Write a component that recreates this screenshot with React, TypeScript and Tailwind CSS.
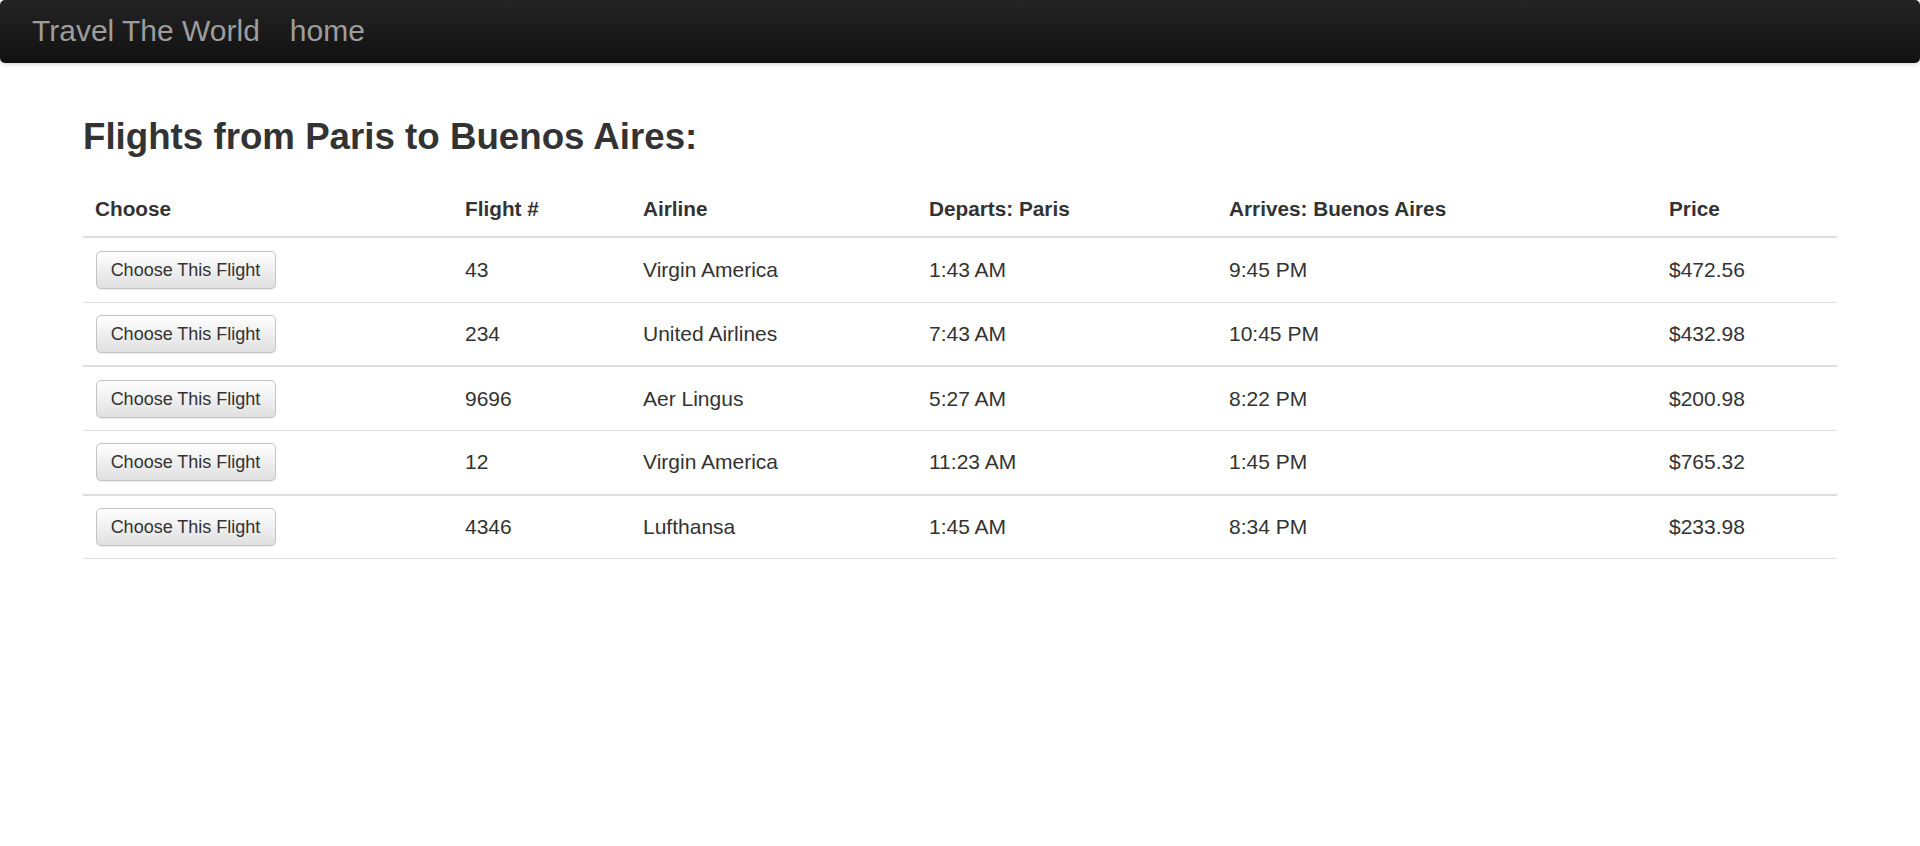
const flights = [
  { num: "43", airline: "Virgin America", departs: "1:43 AM", arrives: "9:45 PM", price: "$472.56" },
  { num: "234", airline: "United Airlines", departs: "7:43 AM", arrives: "10:45 PM", price: "$432.98" },
  { num: "9696", airline: "Aer Lingus", departs: "5:27 AM", arrives: "8:22 PM", price: "$200.98" },
  { num: "12", airline: "Virgin America", departs: "11:23 AM", arrives: "1:45 PM", price: "$765.32" },
  { num: "4346", airline: "Lufthansa", departs: "1:45 AM", arrives: "8:34 PM", price: "$233.98" },
];

export default function App() {
  return (
    <div className="min-h-screen bg-white text-[#333] font-['Liberation_Sans',Arial,sans-serif]">
      {/* Navbar */}
      <nav className="h-[62.5px] flex items-center gap-[30px] px-[32px] rounded-[5px] bg-gradient-to-b from-[#242424] to-[#111111] shadow-[0_1px_4px_rgba(0,0,0,0.2)]">
        <a className="text-[30px] leading-[40px] text-[#9d9d9d]">Travel The World</a>
        <a className="text-[30px] leading-[40px] text-[#9d9d9d]">home</a>
      </nav>

      <div className="px-[83px]">
        <h2 className="mt-[54px] text-[36.7px] leading-[40px] font-bold">Flights from Paris to Buenos Aires:</h2>

        <table className="mt-[29px] w-full table-fixed border-collapse text-[21px] leading-[28px]">
          <colgroup>
            <col className="w-[369.5px]" />
            <col className="w-[178px]" />
            <col className="w-[286px]" />
            <col className="w-[300px]" />
            <col className="w-[440px]" />
            <col />
          </colgroup>
          <thead>
            <tr className="border-b-2 border-[#dddddd] text-left text-[20.75px]">
              <th className="pl-[12px] pt-[9.5px] pb-[12.5px] font-bold">Choose</th>
              <th className="pl-[12.5px] pt-[9.5px] pb-[12.5px] font-bold">Flight #</th>
              <th className="pl-[12.5px] pt-[9.5px] pb-[12.5px] font-bold">Airline</th>
              <th className="pl-[12.5px] pt-[9.5px] pb-[12.5px] font-bold">Departs: Paris</th>
              <th className="pl-[12.5px] pt-[9.5px] pb-[12.5px] font-bold">Arrives: Buenos Aires</th>
              <th className="pl-[12.5px] pt-[9.5px] pb-[12.5px] font-bold">Price</th>
            </tr>
          </thead>
          <tbody>
            {flights.map((f, i) => (
              <tr key={i} className={i % 2 === 1 ? "border-b-2 border-[#dddddd]" : "border-b border-[#dddddd]"}>
                <td className={`pl-[12.5px] align-middle ${i === 0 ? "h-[65.5px]" : "h-[64.2px]"}`}>
                  <button className="h-[38px] w-[180px] rounded-[5px] border border-[#c4c4c4] bg-gradient-to-b from-white to-[#e0e0e0] text-[18px] text-[#333] shadow-[0_1px_1px_rgba(0,0,0,0.08)]">
                    Choose This Flight
                  </button>
                </td>
                <td className="pl-[12.5px] align-middle">{f.num}</td>
                <td className="pl-[12.5px] align-middle">{f.airline}</td>
                <td className="pl-[12.5px] align-middle">{f.departs}</td>
                <td className="pl-[12.5px] align-middle">{f.arrives}</td>
                <td className="pl-[12.5px] align-middle">{f.price}</td>
              </tr>
            ))}
          </tbody>
        </table>
      </div>
    </div>
  );
}
